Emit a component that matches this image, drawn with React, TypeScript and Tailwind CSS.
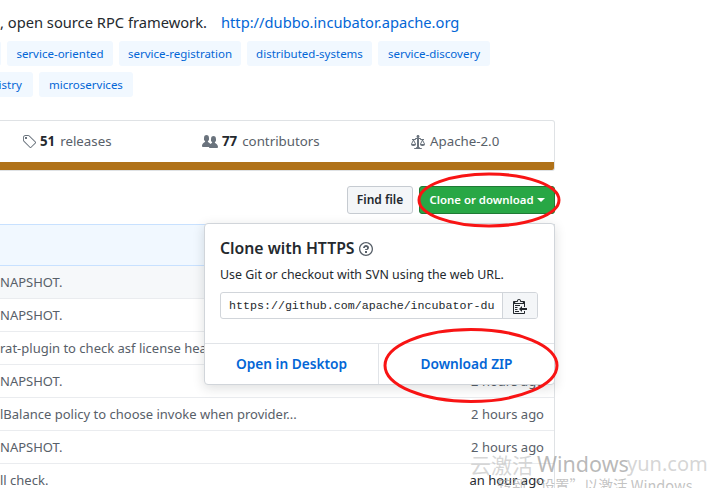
import React from 'react';

const FONT = "font-['Noto_Sans','Open_Sans',sans-serif]";

const Octicon = ({ d, box, className }: { d: string; box: string; className: string }) => (
  <svg viewBox={box} className={className} fill="currentColor" fillRule="evenodd">
    <path d={d} />
  </svg>
);

const TAG_ICON = 'M7.73 1.73C7.26 1.26 6.62 1 5.96 1H3.5C2.13 1 1 2.13 1 3.5v2.47c0 .66.27 1.3.73 1.77l6.06 6.06c.39.39 1.02.39 1.41 0l4.59-4.59a.996.996 0 0 0 0-1.41L7.73 1.73zM2.38 7.09c-.31-.3-.47-.7-.47-1.13V3.5c0-.88.72-1.59 1.59-1.59h2.47c.42 0 .83.16 1.13.47l6.14 6.13-4.73 4.73-6.13-6.15zM3.01 3h2v2H3V3h.01z';
const PEOPLE_ICON = 'M16 12.999c0 .439-.45 1-1 1H7.995c-.539 0-.994-.447-.995-.999H1c-.54 0-1-.561-1-1 0-2.634 3-4 3-4s.229-.409 0-1c-.841-.621-1.058-.59-1-3 .058-2.419 1.367-3 2.5-3s2.442.58 2.5 3c.058 2.41-.159 2.379-1 3-.229.59 0 1 0 1s1.549.711 2.42 2.088C9.196 9.369 10 8.999 10 8.999s.229-.409 0-1c-.841-.62-1.058-.59-1-3 .058-2.419 1.367-3 2.5-3s2.437.581 2.495 3c.059 2.41-.158 2.38-1 3-.229.59 0 1 0 1s3.005 1.366 3.005 4z';
const LAW_ICON = 'M7 4c-.83 0-1.5-.67-1.5-1.5S6.17 1 7 1s1.5.67 1.5 1.5S7.83 4 7 4zm7 6c0 1.11-.89 2-2 2h-1c-1.11 0-2-.89-2-2l2-4h-1c-.55 0-1-.45-1-1H8v8c.42 0 1 .45 1 1h1c.42 0 1 .45 1 1H3c0-.55.58-1 1-1h1c0-.55.58-1 1-1h.03L6 5H5c0 .55-.45 1-1 1H3l2 4c0 1.11-.89 2-2 2H2c-1.11 0-2-.89-2-2l2-4H1V5h3c0-.55.45-1 1-1h4c.55 0 1 .45 1 1h3v1h-1l2 4zM2.5 7L1 10h3L2.5 7zM13 10l-1.5-3-1.5 3h3z';
const CLIPPY_ICON = 'M2 13h4v1H2v-1zm5-6H2v1h5V7zm2 3V8l-3 3 3 3v-2h5v-2H9zM4.5 9H2v1h2.5V9zM2 12h2.5v-1H2v1zm9 1h1v2c-.02.28-.11.52-.3.7-.19.18-.42.28-.7.3H1c-.55 0-1-.45-1-1V4c0-.55.45-1 1-1h3c0-1.11.89-2 2-2 1.11 0 2 .89 2 2h3c.55 0 1 .45 1 1v5h-1V6H1v9h10v-2zM2 5h8c0-.55-.45-1-1-1H8c-.55 0-1-.45-1-1s-.45-1-1-1-1 .45-1 1-.45 1-1 1H3c-.55 0-1 .45-1 1z';
const QUESTION_ICON = 'M6 10h2v2H6v-2zm4-3.5C10 8.64 8 9 8 9H6c0-.55.45-1 1-1h.5c.28 0 .5-.22.5-.5v-1c0-.28-.22-.5-.5-.5h-1c-.28 0-.5.22-.5.5V7H4c0-1.5 1.5-3 3-3s3 1 3 2.5zM7 2.3c3.14 0 5.7 2.56 5.7 5.7s-2.56 5.7-5.7 5.7A5.71 5.71 0 0 1 1.3 8c0-3.14 2.56-5.7 5.7-5.7zM7 1C3.14 1 0 4.14 0 8s3.14 7 7 7 7-3.14 7-7-3.14-7-7-7z';

const Topic = ({ label, width }: { label: string; width: string }) => (
  <a className={`flex h-[25px] shrink-0 items-center justify-center rounded-[3px] bg-[#f1f8ff] text-[11.5px] text-[#0366d6] ${width}`}>
    {label}
  </a>
);

const rows = [
  { msg: 'NAPSHOT.', time: '2 hours ago', bg: 'bg-[#f6f8fa]' },
  { msg: 'NAPSHOT.', time: '2 hours ago', bg: 'bg-white' },
  { msg: 'rat-plugin to check asf license header.', time: '2 hours ago', bg: 'bg-white' },
  { msg: 'NAPSHOT.', time: '2 hours ago', bg: 'bg-white' },
  { msg: 'lBalance policy to choose invoke when provider...', time: '2 hours ago', bg: 'bg-white' },
  { msg: 'NAPSHOT.', time: '2 hours ago', bg: 'bg-white' },
  { msg: 'll check.', time: 'an hour ago', bg: 'bg-white' },
];

export default function App() {
  return (
    <div className={`relative h-[488px] w-[718px] overflow-hidden bg-white ${FONT}`}>
      <div className="flex w-[555px] flex-col">
        {/* description */}
        <div className="flex h-[41px] items-start whitespace-nowrap pt-[10px] text-[14.7px] leading-[24px] text-[#24292e]">
          <span>, open source RPC framework.</span>
          <a className="ml-[14px] text-[#0366d6]">http://dubbo.incubator.apache.org</a>
        </div>

        {/* topics */}
        <div className="flex gap-[6px]">
          <Topic label="" width="-ml-[5px] w-[6px]" />
          <Topic label="service-oriented" width="w-[106px]" />
          <Topic label="service-registration" width="w-[122px]" />
          <Topic label="distributed-systems" width="w-[125px]" />
          <Topic label="service-discovery" width="w-[112px]" />
        </div>
        <div className="mt-[6px] flex gap-[6px]">
          <Topic label="service-registry" width="-ml-[72px] w-[105px]" />
          <Topic label="microservices" width="w-[94px]" />
        </div>

        {/* repo stats */}
        <div className="mt-[23px] flex h-[51px] flex-col overflow-hidden rounded-r-[3px] border border-l-0 border-[#dfe2e5]">
          <div className="flex h-[41px] items-center text-[13.3px] text-[#586069]">
            <span className="ml-[22px] flex w-[180px] items-center">
              <Octicon d={TAG_ICON} box="0 0 14 16" className="mr-[4px] h-[16px] w-[14px] text-[#6a737d]" />
              <b className="mr-[5px] font-bold text-[#24292e]">51</b>releases
            </span>
            <span className="flex w-[209px] items-center">
              <Octicon d={PEOPLE_ICON} box="0 0 16 16" className="mr-[4px] h-[16px] w-[16px] text-[#6a737d]" />
              <b className="mr-[5px] font-bold text-[#24292e]">77</b>contributors
            </span>
            <span className="flex items-center">
              <Octicon d={LAW_ICON} box="0 0 14 16" className="mr-[5px] h-[16px] w-[14px] text-[#6a737d]" />
              Apache-2.0
            </span>
          </div>
          <div className="flex-1 bg-[#b07219]" />
        </div>

        {/* file actions */}
        <div className="mt-[15px] flex justify-end gap-[6px]">
          <button className="h-[28px] w-[66px] rounded-[3px] border border-[#c6cbd1] bg-[#f4f6f8] text-[12px] font-semibold text-[#24292e]">
            Find file
          </button>
          <button className="flex h-[28px] w-[136px] items-center justify-center rounded-[3px] border border-[#1f7a35] bg-[#28a745] text-[11.4px] font-semibold text-white">
            Clone or download
            <span className="ml-[3px] mt-[-1px] h-0 w-0 border-x-[4px] border-t-[4px] border-x-transparent border-t-white" />
          </button>
        </div>

        {/* file table */}
        <div className="mt-[10px] border-r border-[#dfe2e5]">
          <div className="h-[42px] border-y border-[#c8e1ff] bg-[#f1f8ff]" />
          {rows.map((row, i) => (
            <div
              key={i}
              className={`flex h-[33px] items-center justify-between whitespace-nowrap border-b border-[#eaecef] pr-[10px] pt-[1px] text-[13px] text-[#586069] ${row.bg}`}
            >
              <span>{row.msg}</span>
              <span className={row.time === 'an hour ago' ? 'text-[#24292e]' : ''}>{row.time}</span>
            </div>
          ))}
        </div>
      </div>

      {/* clone popover */}
      <div className="absolute left-[204px] top-[223px] w-[351px] rounded-[4px] border border-[#d1d5da] bg-white shadow-[0_3px_12px_rgba(27,31,35,0.15)]">
        <div className="h-[119px] pl-[15px] pr-[16px] pt-[12px]">
          <div className="flex items-center text-[15.8px] font-semibold leading-[24px] text-[#24292e]">
            Clone with HTTPS
            <Octicon d={QUESTION_ICON} box="0 0 14 16" className="ml-[4px] mt-[2px] h-[16px] w-[14px] text-[#586069]" />
          </div>
          <p className="mt-[5px] text-[12.4px] leading-[20px] text-[#24292e]">Use Git or checkout with SVN using the web URL.</p>
          <div className="mt-[7px] flex h-[27px] overflow-hidden rounded-[3px] border border-[#d1d5da]">
            <div className="flex-1 overflow-hidden whitespace-nowrap pl-[8px] font-['Liberation_Mono',monospace] text-[11.65px] leading-[25px] text-[#24292e]">
              https://github.com/apache/incubator-du
            </div>
            <div className="flex w-[35px] items-center justify-center border-l border-[#d1d5da] bg-[#f4f6f8]">
              <Octicon d={CLIPPY_ICON} box="0 0 14 16" className="h-[16px] w-[14px] text-[#24292e]" />
            </div>
          </div>
        </div>
        <div className="flex h-[41px] border-t border-[#e1e4e8] text-[13.7px] font-semibold text-[#0366d6]">
          <a className="flex w-[174px] items-center justify-center border-r border-[#e1e4e8]">Open in Desktop</a>
          <a className="flex flex-1 items-center justify-center">Download ZIP</a>
        </div>
      </div>

      {/* hand-drawn red circles */}
      <svg className="pointer-events-none absolute inset-0" width="718" height="488" fill="none" stroke="#f81414" strokeWidth="3">
        <ellipse cx="489" cy="200" rx="70" ry="26" />
        <ellipse cx="471" cy="365.5" rx="86" ry="36" />
      </svg>

      {/* activation watermark */}
      <div className="pointer-events-none absolute left-[470px] top-[450px] flex whitespace-nowrap text-[21px] leading-[28px]">
        <span className="w-[67px] font-['Noto_Sans_CJK_SC',sans-serif] text-[#c4c4c4]/70">云激活</span>
        <span className="w-[90px] text-[21.5px] text-[#9a9a9a]/70">Windows</span>
        <span className="text-[20px] text-[#c4c4c4]/70">yun.com</span>
      </div>
      <div className="pointer-events-none absolute left-[497px] top-[476px] whitespace-nowrap font-['Noto_Sans_CJK_SC',sans-serif] text-[14.5px] leading-[18px] text-[#a8a8a8]/70">
        转到“设置”以激活 Windows
      </div>
    </div>
  );
}
